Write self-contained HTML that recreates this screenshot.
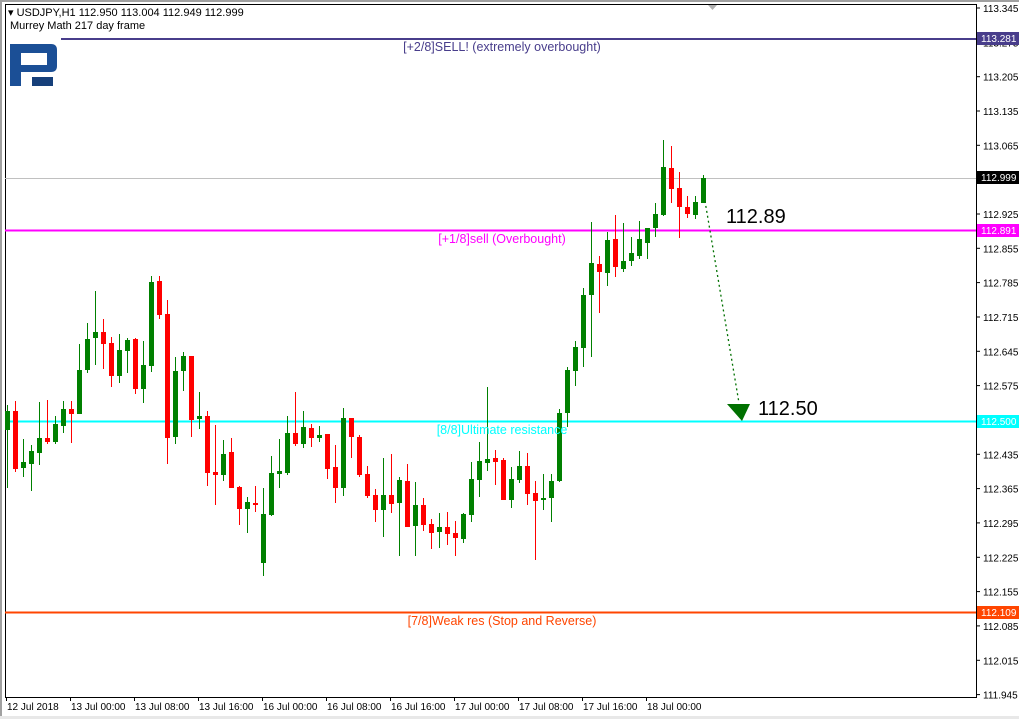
<!DOCTYPE html>
<html><head><meta charset="utf-8"><style>
html,body{margin:0;padding:0;background:#fff;width:1019px;height:719px;overflow:hidden}
svg{display:block}
text{font-family:"Liberation Sans",sans-serif}
</style></head><body>
<svg id="s" width="1019" height="719" xmlns="http://www.w3.org/2000/svg">
<rect x="0" y="0" width="1019" height="719" fill="#fff"/>
<rect x="0" y="0" width="1019" height="2" fill="#a0a0a0"/>
<rect x="0" y="0" width="2" height="719" fill="#a0a0a0"/>
<rect x="0" y="716" width="1019" height="3" fill="#e8e8e8"/>
<line x1="5" y1="4.5" x2="976" y2="4.5" stroke="#000"/>
<line x1="5.5" y1="4" x2="5.5" y2="697" stroke="#000"/>
<line x1="976.5" y1="4" x2="976.5" y2="697" stroke="#000"/>
<line x1="5" y1="697.5" x2="977" y2="697.5" stroke="#000"/>
<polygon points="708,5 717,5 712.5,10" fill="#b0b0b0"/>
<text x="8" y="16" font-size="11" fill="#000">▾ USDJPY,H1  112.950 113.004 112.949 112.999</text>
<text x="10" y="29" font-size="11" fill="#000">Murrey Math 217 day frame</text>
<!-- logo -->
<path d="M10 44 H51 Q57 44 57 50 V66 Q57 72 51 72 H21 V86 H10 Z M21 53 V65 H47 V53 Z" fill="#1b4f96" fill-rule="evenodd"/>
<rect x="32" y="77" width="21" height="9" fill="#163f7a"/>
<!-- lines -->
<line x1="61" y1="39" x2="976" y2="39" stroke="#483d8b" stroke-width="2"/>
<line x1="5" y1="178.5" x2="976" y2="178.5" stroke="#c0c0c0"/>
<line x1="5" y1="230.5" x2="976" y2="230.5" stroke="#ff00ff" stroke-width="2"/>
<line x1="5" y1="421.5" x2="976" y2="421.5" stroke="#00ffff" stroke-width="2"/>
<line x1="5" y1="612.5" x2="976" y2="612.5" stroke="#ff4500" stroke-width="2"/>
<g id="c"></g>
<text x="502" y="51" font-size="12.5" fill="#483d8b" text-anchor="middle">[+2/8]SELL! (extremely overbought)</text>
<text x="502" y="243" font-size="12.5" fill="#ff00ff" text-anchor="middle">[+1/8]sell (Overbought)</text>
<text x="502" y="434" font-size="12.5" fill="#00ffff" text-anchor="middle">[8/8]Ultimate resistance</text>
<text x="502" y="625" font-size="12.5" fill="#ff4500" text-anchor="middle">[7/8]Weak res (Stop and Reverse)</text>
<text x="726" y="223" font-size="20" fill="#000">112.89</text>
<text x="758" y="415" font-size="20" fill="#000">112.50</text>
<line x1="705" y1="201" x2="739" y2="403" stroke="#007000" stroke-width="1.3" stroke-dasharray="2,3"/>
<polygon points="727,404 750,404 742,421" fill="#007000"/>
<g id="ax" font-size="10" fill="#000"></g>
<rect x="977" y="32" width="42" height="13" fill="#483d8b"/><text x="981" y="42" font-size="10" fill="#fff">113.281</text>
<rect x="977" y="171" width="42" height="13" fill="#000"/><text x="981" y="181" font-size="10" fill="#fff">112.999</text>
<rect x="977" y="224" width="42" height="13" fill="#ff00ff"/><text x="981" y="234" font-size="10" fill="#fff">112.891</text>
<rect x="977" y="415" width="42" height="13" fill="#00ffff"/><text x="981" y="425" font-size="10" fill="#fff">112.500</text>
<rect x="977" y="606" width="42" height="13" fill="#ff4500"/><text x="981" y="616" font-size="10" fill="#fff">112.109</text>
</svg>
<script>
var d=[["G",405,411,430,488],["R",401,411,469,472],["G",439,462,468,477],["G",445,451,464,491],["G",402,438,453,465],["R",400,438,442,444],["G",416,424,442,444],["G",401,409,426,433],["R",401,409,414,443],["G",344,370,414,414],["G",323,339,370,373],["G",291,332,338,365],["R",319,332,344,369],["R",337,343,376,387],["G",334,350,376,383],["G",338,340,351,373],["R",338,339,389,394],["G",341,365,389,403],["G",276,282,366,372],["R",276,281,315,319],["R",300,314,438,464],["G",357,371,437,444],["G",352,356,371,391],["R",356,356,420,437],["G",392,416,419,429],["R",411,416,473,486],["R",425,472,475,505],["G",440,454,475,481],["R",438,452,488,488],["R",486,487,509,525],["G",497,502,509,533],["R",486,503,505,512],["G",488,514,563,576],["G",456,473,515,516],["G",439,471,474,488],["G",416,433,473,475],["R",392,433,444,446],["G",411,427,444,448],["R",424,428,438,447],["G",426,435,438,442],["R",434,434,469,479],["R",445,467,488,503],["G",408,418,488,496],["R",418,418,437,458],["R",435,437,475,477],["R",466,474,496,498],["R",489,495,510,522],["G",458,495,510,537],["R",454,495,504,513],["G",477,480,503,556],["R",464,481,527,527],["G",482,505,526,556],["R",498,505,525,531],["R",519,524,533,549],["G",513,527,532,548],["R",512,527,534,545],["R",521,533,538,556],["G",513,514,539,543],["G",462,479,515,522],["G",442,461,480,497],["G",387,459,463,471],["R",450,458,462,485],["R",458,460,500,500],["G",467,479,500,508],["G",451,466,480,483],["R",453,466,494,505],["R",481,493,501,560],["G",474,498,500,510],["G",474,481,498,522],["G",409,413,481,482],["G",367,370,413,427],["G",341,347,371,386],["G",288,295,348,367],["G",222,263,295,357],["R",256,264,272,313],["G",232,240,273,286],["R",215,239,267,277],["G",223,261,269,272],["G",237,253,261,266],["G",221,239,256,259],["G",228,228,243,259],["G",203,214,228,237],["G",140,167,215,216],["R",146,168,189,203],["R",172,188,207,238],["R",196,207,214,218],["G",196,202,215,219],["G",175,178,203,203]];
var h="";d.forEach(function(c,i){var x=7+8*i;var col=c[0]=="G"?"#008000":"#ff0000";
h+='<rect x="'+x+'" y="'+c[1]+'" width="1" height="'+(c[4]-c[1])+'" fill="'+col+'"/>';
h+='<rect x="'+(x-2)+'" y="'+c[2]+'" width="5" height="'+Math.max(2,c[3]-c[2])+'" fill="'+col+'"/>';});
document.getElementById("c").innerHTML=h;
var a="";var p=["113.345","113.275","113.205","113.135","113.065","112.995","112.925","112.855","112.785","112.715","112.645","112.575","112.505","112.435","112.365","112.295","112.225","112.155","112.085","112.015","111.945"];
p.forEach(function(t,i){var y=8+i*34.33;a+='<line x1="976" y1="'+y.toFixed(1)+'" x2="980" y2="'+y.toFixed(1)+'" stroke="#000"/>';
if(t!="112.995"&&t!="112.505")a+='<text x="983" y="'+(y+4).toFixed(1)+'">'+t+'</text>';});
var dl=["12 Jul 2018","13 Jul 00:00","13 Jul 08:00","13 Jul 16:00","16 Jul 00:00","16 Jul 08:00","16 Jul 16:00","17 Jul 00:00","17 Jul 08:00","17 Jul 16:00","18 Jul 00:00"];
dl.forEach(function(t,i){var x=6+i*64;a+='<line x1="'+(x+.5)+'" y1="697" x2="'+(x+.5)+'" y2="701" stroke="#000"/><text x="'+(x+1)+'" y="710">'+t+'</text>';});
document.getElementById("ax").innerHTML=a;
</script>
</body></html>
